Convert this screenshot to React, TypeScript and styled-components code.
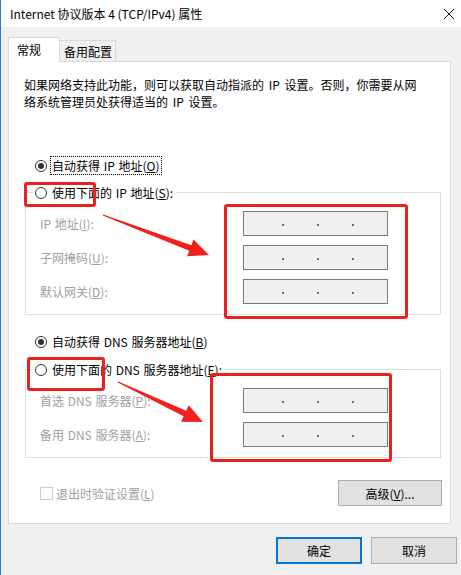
import React from 'react'
import styled, { createGlobalStyle } from 'styled-components'

const GlobalStyle = createGlobalStyle`
  html, body {
    margin: 0;
    padding: 0;
    background: #ffffff;
  }
  body {
    font-family: "Noto Sans CJK SC", "Noto Sans", sans-serif;
    font-size: 12px;
    line-height: 17px;
    color: #000;
  }
`

const Window = styled.div`
  position: relative;
  width: 461px;
  height: 575px;
  display: flex;
  flex-direction: column;
  border-left: 1px solid #2b7bd6;
  box-sizing: border-box;
  overflow: hidden;
`

const TitleBar = styled.div`
  height: 27px;
  flex: none;
  display: flex;
  align-items: center;
  justify-content: space-between;
  padding: 0 6px 0 9px;
  background: #fff;
`

const Title = styled.span`
  font-size: 12px;
  color: #000;
`

const Body = styled.div`
  flex: 1;
  background: #f0f0f0;
  padding: 9px 0 0 7px;
  display: flex;
  flex-direction: column;
`

const TabStrip = styled.div`
  display: flex;
  align-items: flex-end;
  height: 25px;
  position: relative;
  z-index: 1;
`

const Tab = styled.div<{ $active?: boolean }>`
  box-sizing: border-box;
  display: flex;
  align-items: center;
  border: 1px solid #d9d9d9;
  border-bottom: none;
  width: ${(p) => (p.$active ? '52px' : '57px')};
  height: ${(p) => (p.$active ? '25px' : '21px')};
  background: ${(p) => (p.$active ? '#fff' : '#f0f0f0')};
  margin-left: ${(p) => (p.$active ? '0' : '-1px')};
  padding: ${(p) => (p.$active ? '0 0 2px 8px' : '1px 0 0 4px')};
  margin-bottom: ${(p) => (p.$active ? '-1px' : '0')};
`

const Panel = styled.div`
  width: 443px;
  box-sizing: border-box;
  background: #fff;
  border: 1px solid #d9d9d9;
  padding: 14px 8px 17px 16px;
`

const Description = styled.p`
  margin: 0 0 0 -1px;
  white-space: nowrap;
  word-spacing: 2px;
`

const RadioRow = styled.div<{ $top: number }>`
  display: flex;
  align-items: center;
  margin-top: ${(p) => p.$top}px;
  padding-left: 10px;
  height: 17px;
`

const RadioCircle = styled.span<{ $checked?: boolean }>`
  box-sizing: border-box;
  width: 12px;
  height: 12px;
  border: 1px solid #333;
  border-radius: 50%;
  background: #fff;
  display: inline-flex;
  align-items: center;
  justify-content: center;
  margin-right: 4px;
  flex: none;

  &::after {
    content: '';
    width: 6px;
    height: 6px;
    border-radius: 50%;
    background: ${(p) => (p.$checked ? '#333' : 'transparent')};
  }
`

const RadioLabel = styled.span<{ $focused?: boolean }>`
  padding: 0 1px;
  word-spacing: 1px;
  outline: ${(p) => (p.$focused ? '1px dotted #000' : 'none')};
  outline-offset: 0;
`

const Group = styled.section<{ $top: number }>`
  margin-top: ${(p) => p.$top}px;
  padding: 0 0 10px 14px;
  border: 1px solid #dcdcdc;
  width: 416px;
  box-sizing: border-box;
`

const GroupTitle = styled.div`
  display: flex;
  align-items: center;
  width: fit-content;
  height: 17px;
  margin: -9px 0 10px -7px;
  padding: 0 2px;
  background: #fff;
`

const FieldGrid = styled.div`
  display: grid;
  grid-template-columns: 203px 145px;
  row-gap: 9px;
  align-items: center;
`

const FieldLabel = styled.span`
  color: #a0a0a0;
  white-space: nowrap;
  word-spacing: 1px;
`

const IpBox = styled.div`
  box-sizing: border-box;
  height: 25px;
  border: 1px solid #7a7a7a;
  background: #f0f0f0;
  display: flex;
  align-items: center;
  padding: 2px 0 0 38px;
  gap: 33px;
`

const Dot = styled.span`
  width: 2px;
  height: 2px;
  background: #6d6d6d;
`

const BottomRow = styled.div`
  display: flex;
  align-items: center;
  justify-content: space-between;
  margin-top: 22px;
  padding-left: 15px;
`

const CheckLabel = styled.label`
  display: flex;
  align-items: center;
  color: #a0a0a0;
`

const CheckBox = styled.span`
  box-sizing: border-box;
  width: 13px;
  height: 13px;
  border: 1px solid #cccccc;
  background: #fff;
  margin-right: 3px;
`

const Button = styled.button<{ $w: number; $h: number; $primary?: boolean }>`
  box-sizing: border-box;
  width: ${(p) => p.$w}px;
  height: ${(p) => p.$h}px;
  background: #e1e1e1;
  border: ${(p) => (p.$primary ? '2px solid #0078d7' : '1px solid #adadad')};
  font-family: inherit;
  font-size: 12px;
  color: #000;
  padding: 0;
  margin: 0;
`

const Footer = styled.div`
  display: flex;
  justify-content: flex-end;
  gap: 9px;
  margin-top: 13px;
  margin-right: 4px;
`

const Highlight = styled.div<{ $x: number; $y: number; $w: number; $h: number }>`
  position: absolute;
  left: ${(p) => p.$x}px;
  top: ${(p) => p.$y}px;
  width: ${(p) => p.$w}px;
  height: ${(p) => p.$h}px;
  box-sizing: border-box;
  border: 3px solid #e8231f;
  border-radius: 3px;
  pointer-events: none;
`

const Overlay = styled.svg`
  position: absolute;
  left: -1px;
  top: 0;
  pointer-events: none;
`

function arrow(tx: number, ty: number, hx: number, hy: number) {
  const dx = hx - tx
  const dy = hy - ty
  const len = Math.hypot(dx, dy)
  const ux = dx / len
  const uy = dy / len
  const px = -uy
  const py = ux
  const bx = hx - ux * 20
  const by = hy - uy * 20
  const pts = [
    [tx + px * 0.6, ty + py * 0.6],
    [bx + px * 3, by + py * 3],
    [bx + px * 9, by + py * 9],
    [hx, hy],
    [bx - px * 9, by - py * 9],
    [bx - px * 3, by - py * 3],
    [tx - px * 0.6, ty - py * 0.6],
  ]
  return pts.map((p) => p.join(',')).join(' ')
}

const Mn = ({ c }: { c: string }) => <u>{c}</u>

const CloseIcon = () => (
  <svg width="12" height="12" viewBox="0 0 12 12">
    <path d="M1 1 L11 11 M11 1 L1 11" stroke="#111" strokeWidth="1" fill="none" />
  </svg>
)

const IpField = () => (
  <IpBox>
    <Dot />
    <Dot />
    <Dot />
  </IpBox>
)

export default function App() {
  return (
    <>
      <GlobalStyle />
      <Window>
        <TitleBar>
          <Title>Internet 协议版本 4 (TCP/IPv4) 属性</Title>
          <CloseIcon />
        </TitleBar>
        <Body>
          <TabStrip>
            <Tab $active>常规</Tab>
            <Tab>备用配置</Tab>
          </TabStrip>
          <Panel>
            <Description>
              如果网络支持此功能，则可以获取自动指派的 IP 设置。否则，你需要从网
              <br />
              络系统管理员处获得适当的 IP 设置。
            </Description>

            <RadioRow $top={47}>
              <RadioCircle $checked />
              <RadioLabel $focused>
                自动获得 IP 地址(<Mn c="O" />)
              </RadioLabel>
            </RadioRow>

            <Group $top={18}>
              <GroupTitle>
                <RadioCircle />
                <RadioLabel>
                  使用下面的 IP 地址(<Mn c="S" />):
                </RadioLabel>
              </GroupTitle>
              <FieldGrid>
                <FieldLabel>
                  IP 地址(<Mn c="I" />):
                </FieldLabel>
                <IpField />
                <FieldLabel>
                  子网掩码(<Mn c="U" />):
                </FieldLabel>
                <IpField />
                <FieldLabel>
                  默认网关(<Mn c="D" />):
                </FieldLabel>
                <IpField />
              </FieldGrid>
            </Group>

            <RadioRow $top={18}>
              <RadioCircle $checked />
              <RadioLabel>
                自动获得 DNS 服务器地址(<Mn c="B" />)
              </RadioLabel>
            </RadioRow>

            <Group $top={19}>
              <GroupTitle>
                <RadioCircle />
                <RadioLabel>
                  使用下面的 DNS 服务器地址(<Mn c="E" />):
                </RadioLabel>
              </GroupTitle>
              <FieldGrid>
                <FieldLabel>
                  首选 DNS 服务器(<Mn c="P" />):
                </FieldLabel>
                <IpField />
                <FieldLabel>
                  备用 DNS 服务器(<Mn c="A" />):
                </FieldLabel>
                <IpField />
              </FieldGrid>
            </Group>

            <BottomRow>
              <CheckLabel>
                <CheckBox />
                退出时验证设置(<Mn c="L" />)
              </CheckLabel>
              <Button $w={104} $h={26}>
                高级(<Mn c="V" />)...
              </Button>
            </BottomRow>
          </Panel>
          <Footer>
            <Button $w={86} $h={27} $primary>
              确定
            </Button>
            <Button $w={86} $h={27}>
              取消
            </Button>
          </Footer>
        </Body>

        <Highlight $x={23} $y={182} $w={72} $h={25} />
        <Highlight $x={223} $y={204} $w={184} $h={115} />
        <Highlight $x={26} $y={357} $w={78} $h={34} />
        <Highlight $x={209} $y={373} $w={182} $h={89} />
        <Overlay width="461" height="575">
          <polygon points={arrow(103, 215, 209, 255)} fill="#f0211d" />
          <polygon points={arrow(118, 382, 203, 422)} fill="#f0211d" />
        </Overlay>
      </Window>
    </>
  )
}
